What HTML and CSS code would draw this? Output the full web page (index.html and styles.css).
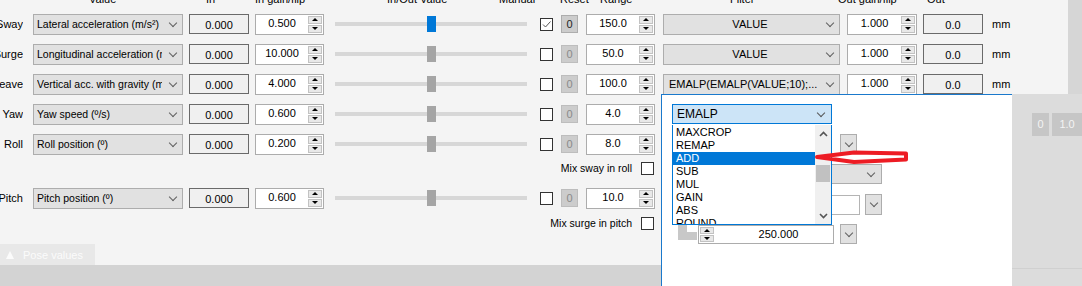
FILE: index.html
```html
<!DOCTYPE html>
<html lang="en">

<head>
    <meta charset="UTF-8">
    <title>Pose settings</title>
    <link rel="stylesheet" href="styles.css">
</head>

<body>
    <div class="app">
        <div class="main">
            <div class="panel">
                <!-- Cabeçalho das colunas (cortado no topo) -->
                <div class="head">
                    <span class="h1">Value</span>
                    <span class="h2">In</span>
                    <span class="h3">In gain/flip</span>
                    <span class="h4">In/Out Value</span>
                    <span class="h5">Manual</span>
                    <span class="h6">Reset</span>
                    <span class="h7">Range</span>
                    <span class="h8">Filter</span>
                    <span class="h9">Out gain/flip</span>
                    <span class="h10">Out</span>
                </div>

                <div class="row">
                    <div class="lbl">Sway</div>
                    <div class="combo value"><span>Lateral acceleration (m/s²)</span></div>
                    <div class="disp">0.000</div>
                    <div class="spin gain"><span class="num">0.500</span><div class="arrows"><i class="up"></i><i class="down"></i></div></div>
                    <div class="slider active"><div class="track"></div><div class="thumb"></div></div>
                    <div class="chk"><svg width="11" height="11" viewBox="0 0 11 11"><path d="M2 5.5 L4.5 8 L9.5 2.5" fill="none" stroke="#555" stroke-width="1"/></svg></div>
                    <div class="reset on">0</div>
                    <div class="spin range"><span class="num">150.0</span><div class="arrows"><i class="up"></i><i class="down"></i></div></div>
                    <div class="combo filter center"><span>VALUE</span></div>
                    <div class="spin outgain"><span class="num">1.000</span><div class="arrows"><i class="up"></i><i class="down"></i></div></div>
                    <div class="disp out">0.0</div>
                    <div class="unit">mm</div>
                </div>

                <div class="row">
                    <div class="lbl">Surge</div>
                    <div class="combo value"><span>Longitudinal acceleration (m/s²)</span></div>
                    <div class="disp">0.000</div>
                    <div class="spin gain"><span class="num">10.000</span><div class="arrows"><i class="up"></i><i class="down"></i></div></div>
                    <div class="slider"><div class="track"></div><div class="thumb"></div></div>
                    <div class="chk"></div>
                    <div class="reset">0</div>
                    <div class="spin range"><span class="num">50.0</span><div class="arrows"><i class="up"></i><i class="down"></i></div></div>
                    <div class="combo filter center"><span>VALUE</span></div>
                    <div class="spin outgain"><span class="num">1.000</span><div class="arrows"><i class="up"></i><i class="down"></i></div></div>
                    <div class="disp out">0.0</div>
                    <div class="unit">mm</div>
                </div>

                <div class="row">
                    <div class="lbl">Heave</div>
                    <div class="combo value"><span>Vertical acc. with gravity (m/s²)</span></div>
                    <div class="disp">0.000</div>
                    <div class="spin gain"><span class="num">4.000</span><div class="arrows"><i class="up"></i><i class="down"></i></div></div>
                    <div class="slider"><div class="track"></div><div class="thumb"></div></div>
                    <div class="chk"></div>
                    <div class="reset">0</div>
                    <div class="spin range"><span class="num">100.0</span><div class="arrows"><i class="up"></i><i class="down"></i></div></div>
                    <div class="combo filter"><span>EMALP(EMALP(VALUE;10);...</span></div>
                    <div class="spin outgain"><span class="num">1.000</span><div class="arrows"><i class="up"></i><i class="down"></i></div></div>
                    <div class="disp out">0.0</div>
                    <div class="unit">mm</div>
                </div>

                <div class="row">
                    <div class="lbl">Yaw</div>
                    <div class="combo value"><span>Yaw speed (º/s)</span></div>
                    <div class="disp">0.000</div>
                    <div class="spin gain"><span class="num">0.600</span><div class="arrows"><i class="up"></i><i class="down"></i></div></div>
                    <div class="slider"><div class="track"></div><div class="thumb"></div></div>
                    <div class="chk"></div>
                    <div class="reset">0</div>
                    <div class="spin range"><span class="num">4.0</span><div class="arrows"><i class="up"></i><i class="down"></i></div></div>
                </div>

                <div class="row">
                    <div class="lbl">Roll</div>
                    <div class="combo value"><span>Roll position (º)</span></div>
                    <div class="disp">0.000</div>
                    <div class="spin gain"><span class="num">0.200</span><div class="arrows"><i class="up"></i><i class="down"></i></div></div>
                    <div class="slider"><div class="track"></div><div class="thumb"></div></div>
                    <div class="chk"></div>
                    <div class="reset">0</div>
                    <div class="spin range"><span class="num">8.0</span><div class="arrows"><i class="up"></i><i class="down"></i></div></div>
                </div>

                <div class="mix">
                    <span>Mix sway in roll</span>
                    <div class="chk"></div>
                </div>

                <div class="row pitch">
                    <div class="lbl">Pitch</div>
                    <div class="combo value"><span>Pitch position (º)</span></div>
                    <div class="disp">0.000</div>
                    <div class="spin gain"><span class="num">0.600</span><div class="arrows"><i class="up"></i><i class="down"></i></div></div>
                    <div class="slider"><div class="track"></div><div class="thumb"></div></div>
                    <div class="chk"></div>
                    <div class="reset">0</div>
                    <div class="spin range"><span class="num">10.0</span><div class="arrows"><i class="up"></i><i class="down"></i></div></div>
                </div>

                <div class="mix second">
                    <span>Mix surge in pitch</span>
                    <div class="chk"></div>
                </div>

                <div class="tab"><i class="tri"></i>Pose values</div>
            </div>
            <div class="vstrip"></div>
        </div>
        <div class="bottombar"></div>

        <!-- Janela do filtro aberta por cima -->
        <div class="popup">
            <div class="pcombo"><span>EMALP</span></div>
            <div class="prow a"><div class="dbtn"></div></div>
            <div class="prow b"><div class="pfield gray"></div></div>
            <div class="prow c"><div class="pfield"></div><div class="dbtn"></div></div>
            <div class="prow d">
                <div class="block"></div>
                <div class="spin left"><div class="arrows"><i class="up"></i><i class="down"></i></div><span class="num">250.000</span></div>
                <div class="dbtn"></div>
            </div>

            <div class="droplist">
                <ul class="items">
                    <li>MAXCROP</li>
                    <li>REMAP</li>
                    <li class="sel">ADD</li>
                    <li>SUB</li>
                    <li>MUL</li>
                    <li>GAIN</li>
                    <li>ABS</li>
                    <li>ROUND</li>
                </ul>
                <div class="sbar">
                    <div class="sarrow"><svg width="9" height="6" viewBox="0 0 9 6"><path d="M1 5 L4.5 1.5 L8 5" fill="none" stroke="#555" stroke-width="1.6"/></svg></div>
                    <div class="sthumb"></div>
                    <div class="sarrow bottom"><svg width="9" height="6" viewBox="0 0 9 6"><path d="M1 1 L4.5 4.5 L8 1" fill="none" stroke="#555" stroke-width="1.6"/></svg></div>
                </div>
            </div>
        </div>

        <div class="sidewin">
            <div class="sidebtns">
                <div class="sbtn">0</div>
                <div class="sbtn wide">1.0</div>
            </div>
        </div>

        <svg class="arrow" width="102" height="22" viewBox="0 0 102 22">
            <path d="M5 11 L42 6.5 L94 7.5 L94 13.5 L42 16 Z" fill="none" stroke="#ed1c24" stroke-width="4" stroke-linejoin="round"/>
        </svg>
    </div>
</body>

</html>
```

FILE: styles.css
```css
* {
    box-sizing: border-box;
}

body {
    margin: 0;
    overflow: hidden;
    font-family: "Liberation Sans", Arial, sans-serif;
    font-size: 11px;
    color: #000;
    background: #f4f4f4;
}

.app {
    position: relative;
    width: 1082px;
    height: 286px;
    display: flex;
    flex-direction: column;
}

.main {
    flex: 1;
    display: flex;
}

.panel {
    flex: 1;
    display: flex;
    flex-direction: column;
}

.vstrip {
    width: 14px;
    background: #d6d6d6;
}

.bottombar {
    height: 21px;
    background: #d3d3d3;
}

/* Cabeçalho */
.head {
    display: flex;
    height: 16px;
    margin-top: -7px;
    line-height: 13px;
    padding-left: 89px;
    white-space: nowrap;
}

.head span { display: block; }
.h1 { width: 117px; }
.h2 { width: 49px; }
.h3 { width: 132px; }
.h4 { width: 112px; }
.h5 { width: 61px; }
.h6 { width: 40px; }
.h7 { width: 130px; }
.h8 { width: 108px; }
.h9 { width: 89px; }

/* Linhas */
.row {
    display: flex;
    align-items: center;
    height: 30px;
}

.row.pitch {
    margin-top: 6px;
}

.lbl {
    width: 23px;
    display: flex;
    justify-content: flex-end;
    white-space: nowrap;
    overflow: hidden;
}

.combo {
    display: flex;
    align-items: center;
    height: 21px;
    background: #e1e1e1;
    border: 1px solid #adadad;
    padding-left: 3px;
}

.combo span {
    flex: 1;
    white-space: nowrap;
    overflow: hidden;
}

.combo::after {
    content: "";
    width: 5px;
    height: 5px;
    border-right: 1px solid #606060;
    border-bottom: 1px solid #606060;
    transform: rotate(45deg);
    margin: -3px 6px 0 8px;
}

.combo.value {
    margin-left: 10px;
    width: 150px;
    font-size: 10.5px;
}

.combo.filter {
    margin-left: 8px;
    width: 177px;
    padding-left: 5px;
}

.combo.center span {
    text-align: center;
    padding-left: 12px;
}

.disp {
    margin-left: 6px;
    width: 60px;
    height: 20px;
    border: 1px solid #6a6a6a;
    background: #f0f0f0;
    text-align: center;
    line-height: 20px;
}

.spin {
    display: flex;
    height: 21px;
    border: 1px solid #acacac;
    background: #fff;
}

.spin .num {
    flex: 1;
    text-align: center;
    line-height: 17px;
}

.spin .arrows {
    width: 15px;
    display: flex;
    flex-direction: column;
    gap: 1px;
    padding: 1px 1px 1px 0;
}

.arrows i {
    flex: 1;
    display: flex;
    align-items: center;
    justify-content: center;
    background: #e8e8e8;
    border: 1px solid #c2c2c2;
}

.arrows i::after {
    content: "";
    border-left: 3px solid transparent;
    border-right: 3px solid transparent;
}

.arrows .up::after {
    border-bottom: 3px solid #000;
}

.arrows .down::after {
    border-top: 3px solid #000;
}

.spin.gain {
    margin-left: 6px;
    width: 69px;
}

.spin.range {
    margin-left: 8px;
    width: 69px;
}

.spin.outgain {
    margin-left: 7px;
    width: 70px;
}

.slider {
    position: relative;
    margin-left: 11px;
    width: 192px;
    height: 16px;
    display: flex;
    align-items: center;
}

.track {
    flex: 1;
    height: 4px;
    background: #d7d7d7;
}

.thumb {
    position: absolute;
    left: 92px;
    top: 0;
    width: 9px;
    height: 16px;
    background: #a5a5a5;
}

.slider.active .thumb {
    background: #0078d7;
}

.chk {
    width: 13px;
    height: 13px;
    border: 1px solid #333;
    background: #fff;
    display: flex;
    align-items: center;
    justify-content: center;
}

.row .chk {
    margin-left: 13px;
}

.reset {
    margin-left: 8px;
    width: 17px;
    height: 18px;
    background: #cccccc;
    border: 1px solid #bdbdbd;
    color: #8a8a8a;
    text-align: center;
    line-height: 17px;
}

.reset.on {
    color: #222;
    border-color: #adadad;
}

.disp.out {
    margin-left: 6px;
}

.unit {
    margin-left: 9px;
}

.mix {
    display: flex;
    align-items: center;
    justify-content: flex-end;
    width: 654px;
    height: 18px;
    font-size: 10.5px;
}

.mix .chk {
    margin-left: 9px;
}

.mix.second {
    margin-top: 1px;
}

.tab {
    margin-top: auto;
    width: 95px;
    height: 21px;
    background: #e8e8e8;
    color: #fbfbfb;
    display: flex;
    align-items: center;
    padding-left: 6px;
}

.tri {
    width: 0;
    height: 0;
    border-left: 4.5px solid transparent;
    border-right: 4.5px solid transparent;
    border-bottom: 8px solid #fbfbfb;
    margin-right: 9px;
}

/* Janela do filtro */
.popup {
    position: absolute;
    left: 661px;
    top: 94px;
    width: 351px;
    bottom: 0;
    background: #fff;
    border-top: 1px solid #1a79cc;
    border-left: 1px solid #1a79cc;
    display: flex;
    flex-direction: column;
}

.pcombo {
    margin: 9px 0 0 10px;
    width: 160px;
    height: 20px;
    background: #cce4f7;
    border: 1px solid #0078d7;
    display: flex;
    align-items: center;
    padding-left: 4px;
    font-size: 12px;
}

.pcombo span {
    flex: 1;
}

.pcombo::after {
    content: "";
    width: 5px;
    height: 5px;
    border-right: 1px solid #555;
    border-bottom: 1px solid #555;
    transform: rotate(45deg);
    margin: -3px 7px 0 0;
}

.prow {
    display: flex;
    align-items: flex-start;
}

.prow.a { margin: 10px 0 0 178px; }
.prow.b { margin: 10px 0 0 38px; }
.prow.c { margin: 11px 0 0 38px; }
.prow.d { margin: 9px 0 0 16px; }

.dbtn {
    width: 17px;
    height: 20px;
    background: #e1e1e1;
    border: 1px solid #adadad;
    display: flex;
    align-items: center;
    justify-content: center;
}

.dbtn::after,
.pfield.gray::after {
    content: "";
    width: 5px;
    height: 5px;
    border-right: 1px solid #606060;
    border-bottom: 1px solid #606060;
    transform: rotate(45deg);
    margin-top: -3px;
}

.pfield {
    width: 160px;
    height: 20px;
    border: 1px solid #b4b4b4;
    background: #fff;
}

.pfield.gray {
    width: 182px;
    background: #e1e1e1;
    border-color: #adadad;
    display: flex;
    align-items: center;
    justify-content: flex-end;
    padding-right: 7px;
}

.prow.c .dbtn {
    margin-left: 5px;
    height: 21px;
    margin-top: -1px;
}

.block {
    margin-top: 1px;
    width: 19px;
    height: 15px;
    background: linear-gradient(#fff, #fff) right top / 10px 7px no-repeat, #c8c8c8;
}

.spin.left {
    margin: 1px 0 0 1px;
    width: 136px;
    height: 19px;
}

.spin.left .arrows {
    padding: 1px 0 1px 1px;
}

.spin.left .num {
    padding-left: 10px;
}

.prow.d .dbtn {
    margin-left: 6px;
}

/* Lista aberta do combo */
.droplist {
    position: absolute;
    left: 10px;
    top: 30px;
    width: 160px;
    height: 100px;
    border: 1px solid #0078d7;
    border-top: none;
    background: #fff;
    display: flex;
    overflow: hidden;
}

.items {
    flex: 1;
    margin: 0;
    padding: 1px 0 0;
    list-style: none;
}

.items li {
    height: 13px;
    line-height: 13px;
    padding-left: 3px;
}

.items li.sel {
    background: #0078d7;
    color: #fff;
}

.sbar {
    width: 16px;
    background: #f0f0f0;
    display: flex;
    flex-direction: column;
}

.sarrow {
    height: 17px;
    display: flex;
    align-items: center;
    justify-content: center;
}

.sarrow.bottom {
    margin-top: auto;
}

.sthumb {
    margin: 23px 1px 0;
    height: 17px;
    background: #c1c1c1;
}

/* Janela cinza à direita */
.sidewin {
    position: absolute;
    left: 1012px;
    top: 94px;
    right: 0;
    bottom: 0;
    background: #dcdcdc;
}

.sidebtns {
    height: 175px;
    border-bottom: 1px solid #d0d0d0;
    display: flex;
    gap: 3px;
    padding: 19px 0 0 20px;
}

.sbtn {
    width: 23px;
    height: 23px;
    background: #c6c6c6;
    color: #f4f4f4;
    text-align: center;
    line-height: 23px;
}

.sbtn.wide {
    width: 40px;
}

.arrow {
    position: absolute;
    left: 812px;
    top: 146px;
}
```
